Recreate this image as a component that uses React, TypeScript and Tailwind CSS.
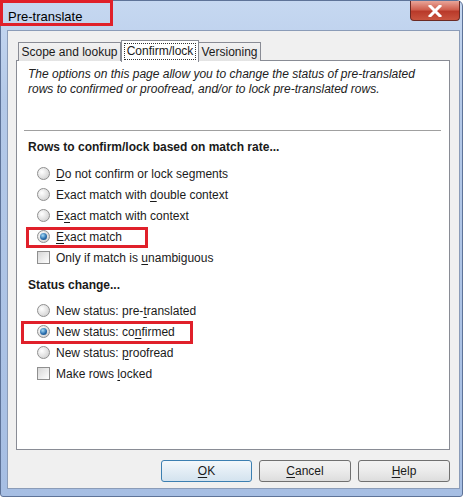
import React from "react";

type Opt = {
	kind: "radio" | "check";
	pre: string;
	key: string;
	post: string;
	checked?: boolean;
};

const matchOptions: Opt[] = [
	{kind: "radio", pre: "", key: "D", post: "o not confirm or lock segments"},
	{kind: "radio", pre: "Exact match with ", key: "d", post: "ouble context"},
	{kind: "radio", pre: "E", key: "x", post: "act match with context"},
	{kind: "radio", pre: "", key: "E", post: "xact match", checked: true},
	{kind: "check", pre: "Only if match is ", key: "u", post: "nambiguous"},
];

const statusOptions: Opt[] = [
	{kind: "radio", pre: "New status: pre-", key: "t", post: "ranslated"},
	{kind: "radio", pre: "New status: co", key: "n", post: "firmed", checked: true},
	{kind: "radio", pre: "New status: ", key: "p", post: "roofread"},
	{kind: "check", pre: "Make rows ", key: "l", post: "ocked"},
];

const Radio = ({checked}: {checked?: boolean}) => (
	<span className="w-[13px] h-[13px] rounded-full border border-[#8f8f8f] bg-[radial-gradient(circle_at_35%_35%,#ffffff,#c8c8c8)] flex items-center justify-center shrink-0">
		{checked && (
			<span className="w-[7px] h-[7px] rounded-full bg-[radial-gradient(circle_at_40%_35%,#a6dcf8,#2a6fae_55%,#0f3c6e)]" />
		)}
	</span>
);

const Check = () => (
	<span className="w-[13px] h-[13px] border border-[#8f8f8f] bg-[linear-gradient(135deg,#d6d6d6,#ffffff)] shrink-0" />
);

const OptionRow = ({opt}: {opt: Opt}) => (
	<div className="h-[21px] flex items-center gap-[6px] pl-[20px]">
		{opt.kind === "radio" ? <Radio checked={opt.checked} /> : <Check />}
		<span>
			{opt.pre}
			<span className="underline underline-offset-2">{opt.key}</span>
			{opt.post}
		</span>
	</div>
);

const DlgButton = ({
	k,
	rest,
	primary,
}: {
	k: string;
	rest: string;
	primary?: boolean;
}) => (
	<div
		className={
			primary
				? "w-[91px] h-[22px] rounded-[3px] border border-[#3c7fb1] bg-[linear-gradient(#f4f8fb,#e3edf5_50%,#d4e3ef)] flex items-center justify-center"
				: "w-[92px] h-[22px] rounded-[3px] border border-[#707070] bg-[linear-gradient(#f2f2f2,#ebebeb_50%,#dddddd)] flex items-center justify-center"
		}>
		<span>
			<span className="underline underline-offset-2">{k}</span>
			{rest}
		</span>
	</div>
);

export default function App() {
	return (
		<div className="w-[467px] h-[500px] bg-white overflow-hidden font-['Liberation_Sans',Arial,sans-serif] text-[12px] text-[#1a1a1a] relative">
			{/* Window frame */}
			<div className="w-[463px] h-[497px] rounded-t-[6px] rounded-b-[3px] border border-[#5e7398] bg-[linear-gradient(180deg,#c6d8f1,#b4c9e8_20%,#a6bee3)] flex flex-col">
				{/* Title bar */}
				<div className="h-[29px] flex items-start justify-between">
					<span className="text-[13px] text-black mt-[6px] ml-[7px]">Pre-translate</span>
					<div className="w-[50px] h-[20px] mr-[2px] rounded-b-[4px] border border-t-0 border-[#6b2a24] bg-[linear-gradient(#e9a598,#d0604f_45%,#b93a2a_55%,#c9543f)] flex items-center justify-center">
						<svg width="14" height="12" viewBox="0 0 14 12">
							<path
								d="M2 1 L12 11 M12 1 L2 11"
								stroke="#ffffff"
								strokeWidth="3"
								strokeLinecap="square"
							/>
						</svg>
					</div>
				</div>

				{/* Client area */}
				<div className="ml-[6px] mr-[2px] h-[459px] border border-[#8b9cb8] bg-[#f0f0f0] flex flex-col">
					<div className="mt-[8px] ml-[8px] mr-[9px]">
						{/* Tabs */}
						<div className="flex items-end pl-[2px] h-[22px] relative z-10">
							<div className="w-[103px] h-[19px] border border-b-0 border-[#898c95] bg-[linear-gradient(#f2f2f2,#e4e4e4)] flex items-center justify-center">
								Scope and lookup
							</div>
							<div className="w-[78px] h-[22px] -mb-px border border-b-0 border-[#898c95] bg-white flex items-start justify-center pt-[2px]">
								<span className="border border-dotted border-[#333] px-[2px] leading-[15px]">Confirm/lock</span>
							</div>
							<div className="w-[62px] h-[19px] border border-b-0 border-l-0 border-[#898c95] bg-[linear-gradient(#f2f2f2,#e4e4e4)] flex items-center justify-center">
								Versioning
							</div>
						</div>

						{/* Tab panel */}
						<div className="h-[390px] -mt-px border border-[#898c95] bg-white flex flex-col">
							<div className="pl-[11px] pt-[6px] pr-[8px] italic leading-[15px] text-[#222]">
								<p>The options on this page allow you to change the status of pre-translated</p>
								<p>rows to confirmed or proofread, and/or to lock pre-translated rows.</p>
							</div>
							<div className="mt-[33px] ml-[7px] mr-[8px] h-px bg-[#a0a0a0]" />
							<div className="mt-[9px] pl-[11px] font-bold leading-[15px]">
								Rows to confirm/lock based on match rate...
							</div>
							<div className="mt-[8px] flex flex-col">
								{matchOptions.map((o, i) => (
									<OptionRow key={i} opt={o} />
								))}
							</div>
							<div className="mt-[10px] pl-[11px] font-bold leading-[15px]">Status change...</div>
							<div className="mt-[7px] flex flex-col">
								{statusOptions.map((o, i) => (
									<OptionRow key={i} opt={o} />
								))}
							</div>
						</div>

						{/* Buttons */}
						<div className="mt-[10px] flex justify-end gap-[7px]">
							<DlgButton k="O" rest="K" primary />
							<DlgButton k="C" rest="ancel" />
							<DlgButton k="H" rest="elp" />
						</div>
					</div>
				</div>
			</div>

			{/* Red annotation boxes */}
			<div className="absolute left-0 top-0 w-[113px] h-[26px] border-[3px] border-[#e0202a]" />
			<div className="absolute left-[26px] top-[227px] w-[122px] h-[21px] border-[3px] border-[#e0202a]" />
			<div className="absolute left-[21px] top-[321px] w-[172px] h-[23px] border-[3px] border-[#e0202a]" />
		</div>
	);
}
